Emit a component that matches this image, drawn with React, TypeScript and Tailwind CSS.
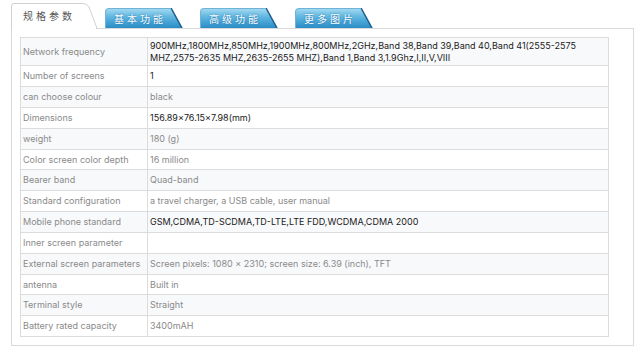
import React from 'react';

type SpecRow = {
  label: string;
  value: string;
  dark?: boolean;
  tall?: boolean;
};

const ROWS: SpecRow[] = [
  {
    label: 'Network frequency',
    value:
      '900MHz,1800MHz,850MHz,1900MHz,800MHz,2GHz,Band 38,Band 39,Band 40,Band 41(2555-2575 MHZ,2575-2635 MHZ,2635-2655 MHZ),Band 1,Band 3,1.9Ghz,I,II,V,VIII',
    dark: true,
    tall: true,
  },
  { label: 'Number of screens', value: '1', dark: true },
  { label: 'can choose colour', value: 'black' },
  { label: 'Dimensions', value: '156.89×76.15×7.98(mm)', dark: true },
  { label: 'weight', value: '180 (g)' },
  { label: 'Color screen color depth', value: '16 million' },
  { label: 'Bearer band', value: 'Quad-band' },
  { label: 'Standard configuration', value: 'a travel charger, a USB cable, user manual' },
  { label: 'Mobile phone standard', value: 'GSM,CDMA,TD-SCDMA,TD-LTE,LTE FDD,WCDMA,CDMA 2000', dark: true },
  { label: 'Inner screen parameter', value: '' },
  { label: 'External screen parameters', value: 'Screen pixels: 1080 × 2310; screen size: 6.39 (inch), TFT' },
  { label: 'antenna', value: 'Built in' },
  { label: 'Terminal style', value: 'Straight' },
  { label: 'Battery rated capacity', value: '3400mAH' },
];

const BLUE_TABS = ['基本功能', '高级功能', '更多图片'];

const BlueTab = ({ label }: { label: string }) => (
  <div className="relative h-[20px] w-[78px]">
    <svg className="absolute inset-0" width="78" height="20" viewBox="0 0 78 20">
      <defs>
        <linearGradient id={`g-${label}`} x1="0" y1="0" x2="0" y2="1">
          <stop offset="0" stopColor="#a9dcf2" />
          <stop offset="0.45" stopColor="#5fb6e0" />
          <stop offset="1" stopColor="#2a8cc6" />
        </linearGradient>
      </defs>
      <path d="M0 20 V4 Q0 0 4 0 H66 L77 20 Z" fill={`url(#g-${label})`} />
      <path d="M66 0 L77 20" stroke="#1d5f8c" strokeWidth="1.5" fill="none" />
      <path d="M0.5 20 V4 Q0.5 0.5 4 0.5 H66" stroke="#6fb3d8" strokeWidth="1" fill="none" />
    </svg>
    <span className="relative flex h-full items-center justify-center pr-[8px] pt-[1px] text-[10px] tracking-[3px] text-white [text-shadow:0_0_2px_#1b6ea3]">
      {label}
    </span>
  </div>
);

export default function App() {
  return (
    <div className="h-[355px] w-[640px] overflow-hidden bg-white font-['Inter',sans-serif]">
      <div className="flex items-end pl-[11px] pt-[3px] font-['Noto_Sans_CJK_SC',sans-serif]">
        <div className="relative z-10 -mb-px h-[26px] w-[86px]">
          <svg className="absolute inset-0" width="86" height="26" viewBox="0 0 86 26">
            <path d="M0.5 26 V3 Q0.5 0.5 3 0.5 H72 Q76 0.5 78 4 L85.5 24 V26 H0.5 Z" fill="#fff" stroke="#d0d0d0" />
            <rect x="1" y="25" width="84" height="1" fill="#fff" />
          </svg>
          <span className="relative flex h-full items-center pl-[12px] pb-[1px] text-[10px] tracking-[3px] text-[#555]">
            规格参数
          </span>
        </div>
        <div className="ml-[8px] flex gap-[17px]">
          {BLUE_TABS.map((t) => (
            <BlueTab key={t} label={t} />
          ))}
        </div>
      </div>
      <div className="ml-[11px] h-[318px] w-[623px] border border-[#d9d9d9] pl-[8px] pt-[8px]">
        <div className="w-[589px] border border-b-0 border-[#dcdcdc] text-[9px] leading-[12px]">
          {ROWS.map((row, i) => (
            <div
              key={row.label}
              className={`flex border-b border-[#dcdcdc] ${row.tall ? 'h-[28px]' : i % 6 === 5 ? 'h-[20px]' : 'h-[21px]'} ${i % 2 === 0 ? 'bg-[#f8f9fb]' : 'bg-white'}`}
            >
              <div className="flex w-[127px] shrink-0 items-center border-r border-[#dcdcdc] pl-[2px] text-[#8a8a8a]">
                {row.label}
              </div>
              <div className={`flex flex-1 items-center pl-[2px] pr-[4px] ${row.dark ? 'text-[#1a1a1a]' : 'text-[#8a8a8a]'}`}>
                {row.value}
              </div>
            </div>
          ))}
        </div>
      </div>
    </div>
  );
}
